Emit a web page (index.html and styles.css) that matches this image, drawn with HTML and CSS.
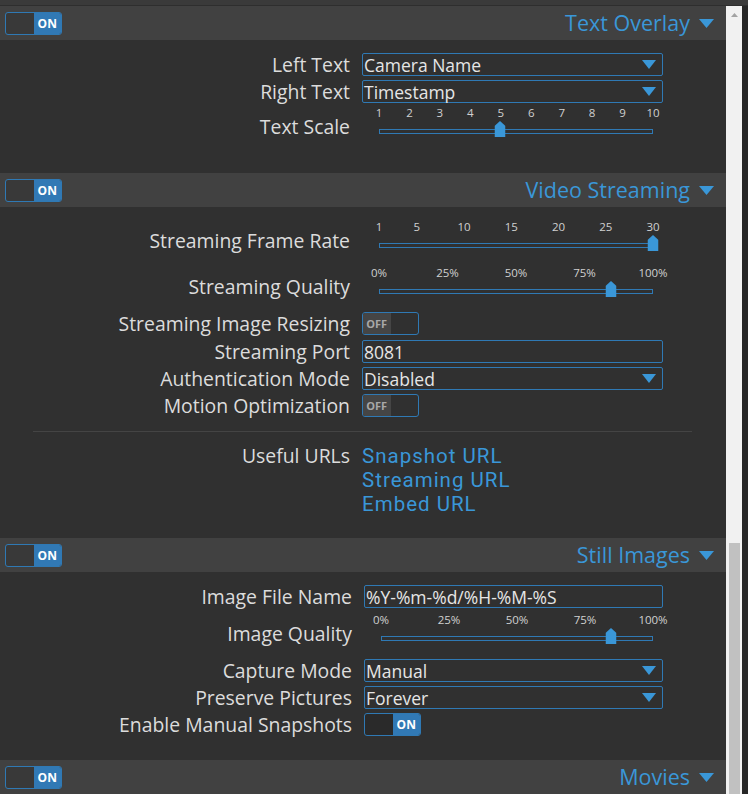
FILE: index.html
```html
<!DOCTYPE html>
<html>
<head>
<meta charset="utf-8">
<link rel="stylesheet" href="styles.css">
</head>
<body>
<div class="topbar"></div>
<div class="frame">
  <div class="pane">
    <!-- Text Overlay -->
    <section class="sec">
      <div class="sec-head">
        <div class="switch on"><span class="sw-a"></span><span class="sw-b">ON</span></div>
        <div class="sec-title">Text Overlay <svg class="tri-lg" width="15" height="9" viewBox="0 0 15 9"><polygon points="0,0 15,0 7.5,9"/></svg></div>
      </div>
      <div class="sec-body b1">
        <div class="row"><div class="lbl">Left Text</div><div class="ctl"><div class="select"><span>Camera Name</span><svg class="tri" width="14" height="9" viewBox="0 0 14 9"><polygon points="0,0 14,0 7,9"/></svg></div></div></div>
        <div class="row"><div class="lbl">Right Text</div><div class="ctl"><div class="select"><span>Timestamp</span><svg class="tri" width="14" height="9" viewBox="0 0 14 9"><polygon points="0,0 14,0 7,9"/></svg></div></div></div>
        <div class="row slider-row gap3"><div class="lbl">Text Scale</div><div class="ctl">
          <div class="slider">
            <div class="ticks">
              <span class="tick" style="left:0%">1</span><span class="tick" style="left:11.11%">2</span><span class="tick" style="left:22.22%">3</span><span class="tick" style="left:33.33%">4</span><span class="tick" style="left:44.44%">5</span><span class="tick" style="left:55.56%">6</span><span class="tick" style="left:66.67%">7</span><span class="tick" style="left:77.78%">8</span><span class="tick" style="left:88.89%">9</span><span class="tick" style="left:100%">10</span>
            </div>
            <div class="track-wrap"><div class="track"></div><svg class="handle" style="left:44.2%" width="11" height="16" viewBox="0 0 11 16"><polygon points="5.5,0 11,5 11,16 0,16 0,5"/></svg></div>
          </div>
        </div></div>
      </div>
    </section>

    <!-- Video Streaming -->
    <section class="sec">
      <div class="sec-head">
        <div class="switch on"><span class="sw-a"></span><span class="sw-b">ON</span></div>
        <div class="sec-title">Video Streaming <svg class="tri-lg" width="15" height="9" viewBox="0 0 15 9"><polygon points="0,0 15,0 7.5,9"/></svg></div>
      </div>
      <div class="sec-body b2">
        <div class="row slider-row"><div class="lbl">Streaming Frame Rate</div><div class="ctl">
          <div class="slider">
            <div class="ticks">
              <span class="tick" style="left:0%">1</span><span class="tick" style="left:13.79%">5</span><span class="tick" style="left:31.03%">10</span><span class="tick" style="left:48.28%">15</span><span class="tick" style="left:65.52%">20</span><span class="tick" style="left:82.76%">25</span><span class="tick" style="left:100%">30</span>
            </div>
            <div class="track-wrap"><div class="track"></div><svg class="handle" style="left:100%" width="11" height="16" viewBox="0 0 11 16"><polygon points="5.5,0 11,5 11,16 0,16 0,5"/></svg></div>
          </div>
        </div></div>
        <div class="row slider-row gap15"><div class="lbl">Streaming Quality</div><div class="ctl">
          <div class="slider">
            <div class="ticks">
              <span class="tick" style="left:0%">0%</span><span class="tick" style="left:25%">25%</span><span class="tick" style="left:50%">50%</span><span class="tick" style="left:75%">75%</span><span class="tick" style="left:100%">100%</span>
            </div>
            <div class="track-wrap"><div class="track"></div><svg class="handle" style="left:84.7%" width="11" height="16" viewBox="0 0 11 16"><polygon points="5.5,0 11,5 11,16 0,16 0,5"/></svg></div>
          </div>
        </div></div>
        <div class="row gap15"><div class="lbl">Streaming Image Resizing</div><div class="ctl"><div class="switch off"><span class="sw-a">OFF</span><span class="sw-b"></span></div></div></div>
        <div class="row gap5"><div class="lbl">Streaming Port</div><div class="ctl"><div class="input">8081</div></div></div>
        <div class="row"><div class="lbl">Authentication Mode</div><div class="ctl"><div class="select"><span>Disabled</span><svg class="tri" width="14" height="9" viewBox="0 0 14 9"><polygon points="0,0 14,0 7,9"/></svg></div></div></div>
        <div class="row"><div class="lbl">Motion Optimization</div><div class="ctl"><div class="switch off"><span class="sw-a">OFF</span><span class="sw-b"></span></div></div></div>
        <div class="sep"></div>
        <div class="row urls"><div class="lbl">Useful URLs</div><div class="ctl links"><a>Snapshot URL</a><a>Streaming URL</a><a>Embed URL</a></div></div>
      </div>
    </section>

    <!-- Still Images -->
    <section class="sec">
      <div class="sec-head">
        <div class="switch on"><span class="sw-a"></span><span class="sw-b">ON</span></div>
        <div class="sec-title">Still Images <svg class="tri-lg" width="15" height="9" viewBox="0 0 15 9"><polygon points="0,0 15,0 7.5,9"/></svg></div>
      </div>
      <div class="sec-body b3">
        <div class="row"><div class="lbl">Image File Name</div><div class="ctl"><div class="input">%Y-%m-%d/%H-%M-%S</div></div></div>
        <div class="row slider-row gap5"><div class="lbl">Image Quality</div><div class="ctl">
          <div class="slider">
            <div class="ticks">
              <span class="tick" style="left:0%">0%</span><span class="tick" style="left:25%">25%</span><span class="tick" style="left:50%">50%</span><span class="tick" style="left:75%">75%</span><span class="tick" style="left:100%">100%</span>
            </div>
            <div class="track-wrap"><div class="track"></div><svg class="handle" style="left:84.7%" width="11" height="16" viewBox="0 0 11 16"><polygon points="5.5,0 11,5 11,16 0,16 0,5"/></svg></div>
          </div>
        </div></div>
        <div class="row gap15"><div class="lbl">Capture Mode</div><div class="ctl"><div class="select"><span>Manual</span><svg class="tri" width="14" height="9" viewBox="0 0 14 9"><polygon points="0,0 14,0 7,9"/></svg></div></div></div>
        <div class="row"><div class="lbl">Preserve Pictures</div><div class="ctl"><div class="select"><span>Forever</span><svg class="tri" width="14" height="9" viewBox="0 0 14 9"><polygon points="0,0 14,0 7,9"/></svg></div></div></div>
        <div class="row"><div class="lbl">Enable Manual Snapshots</div><div class="ctl"><div class="switch on"><span class="sw-a"></span><span class="sw-b">ON</span></div></div></div>
      </div>
    </section>

    <!-- Movies -->
    <section class="sec">
      <div class="sec-head">
        <div class="switch on"><span class="sw-a"></span><span class="sw-b">ON</span></div>
        <div class="sec-title">Movies <svg class="tri-lg" width="15" height="9" viewBox="0 0 15 9"><polygon points="0,0 15,0 7.5,9"/></svg></div>
      </div>
    </section>
  </div>
  <div class="scrollbar">
    <svg class="sb-arrow" width="7" height="4" viewBox="0 0 7 4"><polygon points="3.5,0 7,4 0,4"/></svg>
    <div class="sb-thumb"></div>
  </div>
  <div class="edge"></div>
</div>
</body>
</html>
```

FILE: styles.css
```css
* { box-sizing: border-box; }
html, body { margin: 0; padding: 0; }
body {
  width: 748px;
  height: 794px;
  overflow: hidden;
  background: #262626;
  font-family: "Open Sans", sans-serif;
  color: #dcdcdc;
}
.topbar {
  height: 6px;
  background: #3a3a3a;
  border-bottom: 1px solid #2e2e2e;
}
.frame {
  display: flex;
  height: 788px;
}
.pane {
  width: 726px;
  height: 788px;
  overflow: hidden;
  background: #303030;
}
.scrollbar {
  width: 16px;
  background: #f1f1f1;
  display: flex;
  flex-direction: column;
  align-items: center;
}
.sb-arrow { margin-top: 7px; fill: #a3a3a3; }
.sb-thumb {
  margin-top: 526px;
  width: 11px;
  flex: 1;
  background: #c1c1c1;
}
.edge { width: 6px; background: #262626; }

.sec-head {
  height: 34px;
  background: #414141;
  display: flex;
  align-items: center;
  justify-content: space-between;
  padding: 0 12px 0 5px;
}
.sec-title {
  color: #3a97d8;
  font-size: 21.5px;
  display: flex;
  align-items: center;
  gap: 9px;
  line-height: 1;
}
.tri-lg, .tri { fill: #3a97d8; }

.sec-body { padding-right: 63px; }
.b1 { padding-top: 13px; padding-bottom: 36px; }
.b2 { padding-top: 13px; padding-bottom: 22px; }
.b3 { padding-top: 13px; padding-bottom: 24px; }

.row {
  display: flex;
  align-items: center;
  height: 23px;
  margin-top: 4px;
}
.row:first-child { margin-top: 0; }
.row.gap3 { margin-top: 3px; }
.row.gap5 { margin-top: 5px; }
.row.gap15 { margin-top: 15px; }
.lbl {
  width: 350px;
  text-align: right;
  font-size: 19.4px;
  line-height: 20px;
  white-space: nowrap;
  color: #dcdcdc;
}
.ctl {
  flex: 1;
  margin-left: 12px;
  height: 100%;
}
.b3 .lbl { width: 352px; }

.select, .input {
  height: 23px;
  border: 1px solid #2f79b4;
  border-radius: 2px;
  display: flex;
  align-items: center;
  justify-content: space-between;
  padding: 0 6px 0 1px;
  font-size: 17.5px;
  color: #e6e6e6;
  white-space: nowrap;
}

.switch {
  width: 57px;
  height: 23px;
  border: 1px solid #2f79b4;
  border-radius: 3px;
  display: flex;
  overflow: hidden;
  font-size: 11px;
  font-weight: 700;
}
.switch span {
  flex: 1;
  display: flex;
  align-items: center;
  justify-content: center;
}
.switch.on .sw-a { background: rgba(0,0,0,0.12); }
.switch.on .sw-b { background: #3179b5; color: #fff; font-size: 12px; }
.switch.off .sw-a { background: #454545; color: #a8a8a8; }
.switch.off .sw-b { background: transparent; }

.slider-row {
  height: 31px;
  align-items: flex-end;
}
.slider-row .ctl { height: auto; }
.slider { margin: 0 10px 0 17px; }
.ticks {
  position: relative;
  height: 14px;
  font-size: 11.5px;
  line-height: 14px;
  color: #d0d0d0;
}
.tick {
  position: absolute;
  top: 0;
  transform: translateX(-50%);
  white-space: nowrap;
}
.track-wrap {
  position: relative;
  height: 16px;
  margin-top: 1px;
}
.track {
  position: absolute;
  left: 0;
  right: 0;
  top: 8px;
  height: 5px;
  border: 1px solid #2f79b4;
}
.handle {
  position: absolute;
  top: 0;
  transform: translateX(-50%);
  fill: #3a97d8;
}

.sep {
  height: 1px;
  background: #444444;
  margin: 14px -29px 12px 33px;
}
.urls {
  height: auto;
  align-items: flex-start;
}
.urls .lbl { line-height: 24px; }
.links {
  display: flex;
  flex-direction: column;
}
.links a {
  display: block;
  height: 24px;
  color: #3a97d8;
  font-family: Roboto, "Open Sans", sans-serif;
  font-size: 20.5px;
  letter-spacing: 1px;
  line-height: 24px;
}
```
